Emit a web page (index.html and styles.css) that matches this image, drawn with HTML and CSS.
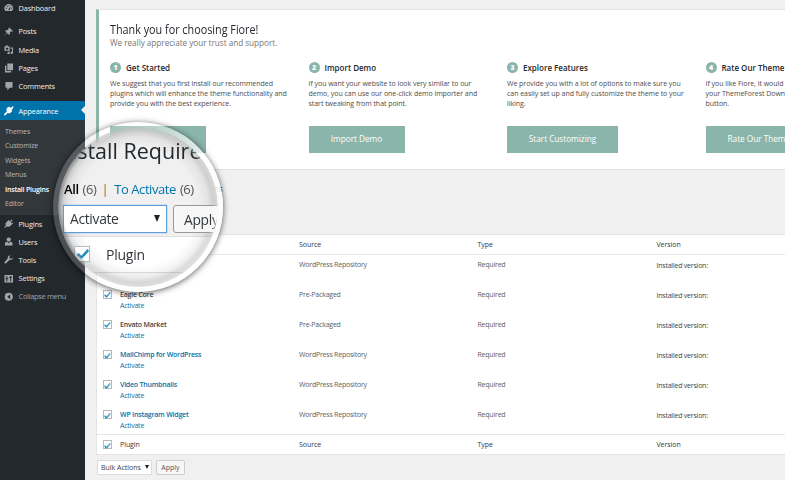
FILE: index.html
```html
<!DOCTYPE html>
<html lang="en">
<head>
<meta charset="utf-8">
<title>Install Required Plugins</title>
<link rel="stylesheet" href="styles.css">
</head>
<body>
<div class="app">
  <nav class="side">
    <a class="item dash"><svg viewBox="0 0 20 20"><path d="M3 17a9 9 0 1 1 14 0z"/><path class="cut" d="M9 14l5-7-2 8zM4 10h2v2H4zM6 6h2v2H6zM10 4h2v2h-2zM15 10h2v2h-2z"/></svg><span>Dashboard</span></a>
    <a class="item"><svg viewBox="0 0 20 20"><path d="M11 1l8 8-2 1-2-1-3 3c1 2 0 4-1 5l-4-4-6 5 5-6-4-4c1-1 3-2 5-1l3-3-1-1z"/></svg><span>Posts</span></a>
    <a class="item"><svg viewBox="0 0 20 20"><path fill-rule="evenodd" d="M1 3h2l1-2h4l1 2h3v9H1zM6.500 5a2.500 2.500 0 1 0 .1 0zM14 5h5v11a2.500 2.500 0 1 1-2-2V8h-3zM10 13h2v4a2.500 2.500 0 1 1-2-2z"/></svg><span>Media</span></a>
    <a class="item"><svg viewBox="0 0 20 20"><path d="M7 1h12v14H7zM2 5h3v12h10v3H2z"/></svg><span>Pages</span></a>
    <a class="item"><svg viewBox="0 0 20 20"><path d="M4 2h13l1 1v10l-1 1h-5l-5 6v-6H4l-1-1V3z"/></svg><span>Comments</span></a>
    <a class="item current"><svg viewBox="0 0 20 20"><path d="M6 4l5-3 2 3 3-2 4-2-1 5-3 3 1 3-3 3-4 2-2-2-4 5-3 1-1-1 1-3 5-4-1-3z"/></svg><span>Appearance</span></a>
    <div class="sub">
      <a>Themes</a><a>Customize</a><a>Widgets</a><a>Menus</a><a class="on">Install Plugins</a><a>Editor</a>
    </div>
    <a class="item"><svg viewBox="0 0 20 20"><path d="M12 5l4-4 2 2-4 4 2 2 3-2 0 2-5 5c-3 3-6 3-8 1l-4 4-1-2 3-4c-2-3 0-5 2-7l4-4 1 1z"/></svg><span>Plugins</span></a>
    <a class="item"><svg viewBox="0 0 20 20"><circle cx="10" cy="5.500" r="4.500"/><path d="M2 18v-4c0-3 3-4 5-4l3 3 3-3c2 0 5 1 5 4v4z"/></svg><span>Users</span></a>
    <a class="item"><svg viewBox="0 0 20 20"><path d="M18 5l-3 3-3-1-1-3 3-3c-4-1-7 2-6 6l-7 8c-1 2 2 4 4 2l7-7c4 1 7-1 6-5z"/></svg><span>Tools</span></a>
    <a class="item"><svg viewBox="0 0 20 20"><path d="M1 2h18v16H1z"/><path class="cut" d="M5 4h2v5h2v2H7v5H5v-5H3V9h2zM13 4h2v2h2v2h-2v8h-2V8h-2V6h2z"/></svg><span>Settings</span></a>
    <a class="item collapse"><svg viewBox="0 0 20 20"><circle cx="10" cy="10" r="8.500"/><path class="cut" d="M13 5v10l-6-5z"/></svg><span>Collapse menu</span></a>
  </nav>

  <main class="main">
    <section class="welcome">
      <h2>Thank you for choosing Fiore!</h2>
      <p class="lead">We really appreciate your trust and support.</p>
      <div class="steps">
        <div class="step"><h3><b>1</b>Get Started</h3><p>We suggest that you first install our recommended<br>plugins which will enhance the theme functionality and<br>provide you with the best experience.</p><a class="btn"></a></div>
        <div class="step"><h3><b>2</b>Import Demo</h3><p>If you want your website to look very similar to our<br>demo, you can use our one-click demo importer and<br>start tweaking from that point.</p><a class="btn">Import Demo</a></div>
        <div class="step"><h3><b>3</b>Explore Features</h3><p>We provide you with a lot of options to make sure you<br>can easily set up and fully customize the theme to your<br>liking.</p><a class="btn wide">Start Customizing</a></div>
        <div class="step"><h3><b>4</b>Rate Our Theme</h3><p>If you like Fiore, it would h<br>your ThemeForest Downlo<br>button.</p><a class="btn last">Rate Our Theme</a></div>
      </div>
    </section>
    <div class="heading">ns</div>
    <section class="table">
      <div class="row head"><i></i><span></span><span>Source</span><span>Type</span><span>Version</span></div>
      <div class="row"><i></i><span></span><span>WordPress Repository</span><span>Required</span><span class="ver">Installed version:</span></div>
      <div class="row"><i class="cb"></i><span><strong class="dark">Eagle Core</strong><a>Activate</a></span><span>Pre-Packaged</span><span>Required</span><span class="ver">Installed version:</span></div>
      <div class="row"><i class="cb"></i><span><strong class="dark">Envato Market</strong><a>Activate</a></span><span>Pre-Packaged</span><span>Required</span><span class="ver">Installed version:</span></div>
      <div class="row"><i class="cb"></i><span><strong>MailChimp for WordPress</strong><a>Activate</a></span><span>WordPress Repository</span><span>Required</span><span class="ver">Installed version:</span></div>
      <div class="row"><i class="cb"></i><span><strong>Video Thumbnails</strong><a>Activate</a></span><span>WordPress Repository</span><span>Required</span><span class="ver">Installed version:</span></div>
      <div class="row"><i class="cb"></i><span><strong>WP Instagram Widget</strong><a>Activate</a></span><span>WordPress Repository</span><span>Required</span><span class="ver">Installed version:</span></div>
      <div class="row foot"><i class="cb"></i><span>Plugin</span><span>Source</span><span>Type</span><span>Version</span></div>
    </section>
    <div class="bulk"><div class="select">Bulk Actions<em></em></div><div class="apply">Apply</div></div>
  </main>
</div>

<div class="lens">
  <div class="glass">
    <div class="l-title">Install Require</div>
    <div class="l-links"><b>All</b><span>(6)</span><i>|</i><a>To Activate</a><span>(6)</span></div>
    <div class="l-controls"><div class="l-select">Activate<em></em></div><div class="l-apply">Apply</div></div>
    <div class="l-row"><i class="cb big"></i><span>Plugin</span></div>
  </div>
</div>
</body>
</html>
```
FILE: styles.css
```css
* { box-sizing: border-box; }
body { margin: 0; width: 785px; height: 480px; overflow: hidden; position: relative; background: #f0f0f0; font-family: "Open Sans", "Noto Sans", sans-serif; color: #444; }
h2, h3, p { margin: 0; font-weight: 400; }
.app { display: flex; height: 480px; }

.side { width: 85px; flex: none; background: #23282d; font-size: 7.4px; letter-spacing: -.15px; line-height: 18.2px; font-weight: 500; overflow: hidden; }
.item { display: flex; align-items: center; height: 18.2px; padding-left: 4px; color: #eee; white-space: nowrap; }
.item span { margin-left: 5px; }
.item svg { width: 9.500px; height: 9.500px; fill: #a0a5aa; flex: none; }
.item .cut { fill: #23282d; }
.dash { height: 15.400px; margin-bottom: 7px; }
.current { background: #0073aa; color: #fff; height: 18.500px; margin-top: 6px; padding-top: 1px; position: relative; }
.current svg { fill: #fff; }
.current::after { content: ""; position: absolute; right: 0; top: 5px; border: 4.500px solid transparent; border-right-color: #f0f0f0; border-left: 0; }
.sub { background: #32373c; height: 95px; padding: 5px 0 0 5px; font-size: 7px; font-weight: 400; letter-spacing: -.12px; line-height: 14.5px; color: #b4b9be; }
.sub a { display: block; white-space: nowrap; }
.sub .on { color: #fff; font-weight: 600; letter-spacing: -.2px; }
.collapse { color: #a0a5aa; font-weight: 400; letter-spacing: -.28px; }

.main { flex: 1; min-width: 0; padding: 9px 0 0 11px; overflow: hidden; }
.welcome { height: 161px; background: #fff; border-left: 3px solid #8ab5aa; border-top: 1px solid #e5e5e5; border-bottom: 1px solid #e2e2e2; padding: 12px 0 0 11px; overflow: hidden; }
.welcome h2 { font-size: 12px; line-height: 16px; color: #23282d; white-space: nowrap; transform: scaleX(.9); transform-origin: left; }
.lead { font-size: 8.2px; line-height: 9px; color: #777; letter-spacing: -.03px; }
.steps { display: flex; width: 796px; margin-top: 15px; }
.step { width: 198.5px; flex: none; }
.step h3 { display: flex; align-items: center; height: 11px; font-size: 8px; font-weight: 600; color: #23282d; white-space: nowrap; }
.step h3 b { width: 11px; height: 11px; border-radius: 50%; background: #8ab5aa; color: #fff; font-size: 7px; line-height: 11px; text-align: center; margin-right: 5px; }
.step p { margin-top: 6px; height: 47.400px; font-size: 7px; line-height: 10.2px; letter-spacing: -.04px; color: #4c4c4c; white-space: nowrap; }
.btn { display: block; width: 96px; height: 26.600px; background: #8ab5aa; color: #fff; font-size: 8.3px; line-height: 26.600px; letter-spacing: -.05px; text-align: center; white-space: nowrap; }
.wide { width: 111px; }
.last { width: 106px; text-align: left; padding-left: 22px; }
.heading { height: 64px; padding: 13px 0 0 117px; line-height: 12px; font-size: 9px; }

.table { background: #fff; border: 1px solid #e5e5e5; border-right: 0; height: 220.500px; font-size: 7px; line-height: 11px; letter-spacing: -.22px; }
.row { display: grid; grid-template-columns: 23px 179px 178.5px 179px 1fr; height: 30.1px; padding-top: 4px; color: #606060; white-space: nowrap; }
.row strong, .row a { display: block; color: #0073aa; }
.row strong { font-weight: 600; }
.row .dark { color: #444; }
.ver { padding-top: 1px; color: #444; }
.head { height: 20px; color: #32373c; border-bottom: 1px solid #e8e8e8; letter-spacing: -.05px; }
.foot { height: 20px; margin-top: -1.200px; color: #32373c; border-top: 1px solid #e5e5e5; letter-spacing: -.05px; }
.cb { width: 9px; height: 9px; margin: 1px 0 0 6px; border: 1px solid #b4b9be; background: #fff; position: relative; }
.cb::after { content: ""; position: absolute; left: 2px; top: .3px; box-sizing: border-box; width: 3.400px; height: 5.600px; border: solid #1e8cbe; border-width: 0 1px 1px 0; box-shadow: .5px .5px 0 #1e8cbe; transform: rotate(42deg); }
.bulk { display: flex; gap: 4px; margin-top: 5px; padding-left: 1px; font-size: 7px; line-height: 13px; }
.select { width: 55px; height: 15px; background: #fff; border: 1px solid #ddd; padding-left: 3px; display: flex; align-items: center; gap: 4px; white-space: nowrap; }
.select em { border: 2px solid transparent; border-top: 4px solid #222; border-bottom: 0; }
.apply { width: 29px; height: 15px; border: 1px solid #ccc; border-radius: 2px; background: #f7f7f7; text-align: center; color: #555; }

/* Magnifying lens over the bulk action controls */
.lens { position: absolute; left: 53px; top: 121.500px; width: 170px; height: 170px; padding: 5px; border-radius: 50%; background: linear-gradient(90deg, rgba(255,255,255,.18) 30%, rgba(255,255,255,.4) 60%, rgba(255,255,255,.85) 95%); box-shadow: 0 1px 6px rgba(0,0,0,.65); }
.glass { width: 160px; height: 160px; border-radius: 50%; overflow: hidden; color: #32373c; white-space: nowrap;
  background: radial-gradient(circle, rgba(0,0,0,0) 60px, rgba(0,0,0,.05) 70px, rgba(0,0,0,.22) 80px), linear-gradient(#f0f0f0 109px, #dfdfdf 109px, #dfdfdf 110px, #fff 110px, #fff 145px, #ddd 145px, #ddd 146px, #fafafa 146px);
  -webkit-mask-image: radial-gradient(circle, #000 75px, rgba(0,0,0,.5) 80px); mask-image: radial-gradient(circle, #000 75px, rgba(0,0,0,.5) 80px); }
.l-title { height: 53px; padding: 9px 0 0 0; font-size: 21.5px; line-height: 30px; color: #23282d; }
.l-links { display: flex; height: 25px; padding-left: 6px; font-size: 13px; line-height: 18px; letter-spacing: -.42px; }
.l-links b { font-weight: 600; color: #000; margin-right: 4px; }
.l-links span { color: #555; }
.l-links i { font-style: normal; color: #a60; margin: 0 6px 0 5px; }
.l-links a { color: #0073aa; margin-right: 4px; }
.l-controls { display: flex; gap: 6px; padding-left: 5px; font-size: 13.8px; line-height: 27px; letter-spacing: -.3px; }
.l-select { display: flex; align-items: center; justify-content: space-between; width: 104px; height: 28px; padding: 0 6px; border: 1px solid #5b9dd9; box-shadow: 0 0 1px #5b9dd9; background: #fff; flex: none; }
.l-select em { border: 3.500px solid transparent; border-top: 7px solid #222; border-bottom: 0; }
.l-apply { width: 60px; height: 28px; padding-left: 10px; border: 1px solid #999; border-radius: 3px; background: #f7f7f7; flex: none; }
.l-row { display: flex; align-items: center; height: 35px; margin-top: 4px; padding-left: 16px; font-size: 14px; letter-spacing: -.25px; }
.l-row span { margin-left: 16px; padding-top: 1px; }
.big { width: 16px; height: 16px; margin: 0; }
.big::after { left: 4.500px; top: 0; width: 6px; height: 11px; border-width: 0 2px 2px 0; }
```
